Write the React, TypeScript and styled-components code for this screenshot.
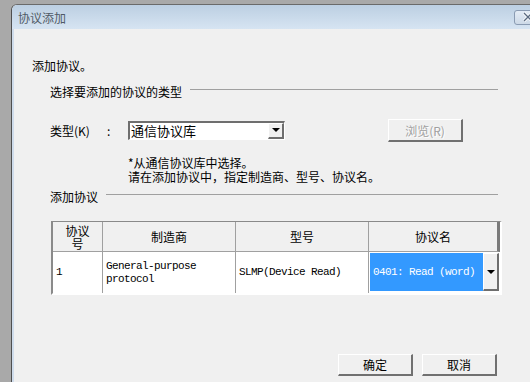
import React from 'react';
import styled, { createGlobalStyle } from 'styled-components';

const GlobalStyle = createGlobalStyle`
  html, body {
    margin: 0;
    padding: 0;
    background: #a9a9a9;
    overflow: hidden;
  }
  body {
    font-family: "Noto Sans CJK SC", "Liberation Sans", sans-serif;
    font-size: 12px;
    color: #000;
  }
`;

const Desktop = styled.div`
  padding: 4px 0 0 11px;
  height: 378px;
`;

const Window = styled.div`
  width: 519px;
  height: 378px;
  box-sizing: border-box;
  border-left: 1px solid #4f4f4f;
  border-top: 1px solid #6a6a6a;
  border-top-left-radius: 6px;
  background: #f0f0f0;
  overflow: hidden;
  display: flex;
  flex-direction: column;
`;

const TitleBar = styled.div`
  height: 24px;
  flex: none;
  display: flex;
  align-items: center;
  padding-left: 6px;
  background: linear-gradient(#bccfe2, #d6e4f2);
  color: #505a66;
  font-size: 12px;
  overflow: hidden;
`;

const CloseButton = styled.div`
  margin-left: auto;
  margin-right: -24px;
  width: 40px;
  height: 15px;
  flex: none;
  border: 1px solid #8a9bb2;
  border-radius: 3px;
  background: linear-gradient(#e4ecf5, #cdd9e7);
  display: flex;
  align-items: center;
  padding-left: 7px;
  box-sizing: border-box;
`;

const Frame = styled.div`
  flex: 1;
  border-left: 2px solid #cfdceb;
`;

const Content = styled.div`
  width: 488px;
  padding-left: 18px;
  box-sizing: border-box;
  display: flex;
  flex-direction: column;
`;

const Text = styled.div<{ $top?: number }>`
  line-height: 14px;
  height: 14px;
  margin-top: ${(p) => p.$top ?? 0}px;
  white-space: nowrap;
`;

const Group = styled.div`
  padding-left: 18px;
  padding-right: 4px;
  display: flex;
  flex-direction: column;
`;

const SectionHeader = styled.div<{ $top: number }>`
  display: flex;
  align-items: center;
  gap: 8px;
  margin-top: ${(p) => p.$top}px;
  line-height: 14px;
  white-space: nowrap;
`;

const Rule = styled.div`
  flex: 1;
  height: 0;
  border-top: 1px solid #a0a0a0;
  margin-top: -5px;
`;

const TypeRow = styled.div`
  display: flex;
  align-items: center;
  height: 22px;
  margin-top: 20px;
`;

const Label = styled.span`
  width: 57px;
  white-space: nowrap;
`;

const Colon = styled.span`
  width: 21px;
`;

const Combo = styled.div`
  width: 157px;
  height: 19px;
  box-sizing: border-box;
  border-top: 2px solid #6e6e6e;
  border-left: 2px solid #6e6e6e;
  border-right: 1px solid #fff;
  border-bottom: 1px solid #fff;
  background: #fff;
  display: flex;
  align-items: center;
  font-size: 13px;
  padding-left: 1px;
`;

const ComboText = styled.span`
  flex: 1;
  line-height: 14px;
`;

const DropButton = styled.div<{ $h: number }>`
  width: 16px;
  height: ${(p) => p.$h}px;
  box-sizing: border-box;
  background: #f0f0f0;
  border-top: 1px solid #fff;
  border-left: 1px solid #fff;
  border-right: 2px solid #6e6e6e;
  border-bottom: 2px solid #6e6e6e;
  display: flex;
  align-items: center;
  justify-content: center;
  flex: none;
`;

const Arrow = styled.div`
  width: 0;
  height: 0;
  border-left: 4px solid transparent;
  border-right: 4px solid transparent;
  border-top: 4px solid #000;
`;

const Button = styled.div<{ $disabled?: boolean }>`
  width: 75px;
  height: 22px;
  box-sizing: border-box;
  border-top: 1px solid #fff;
  border-left: 1px solid #fff;
  border-right: 2px solid #707070;
  border-bottom: 2px solid #707070;
  background: #f0f0f0;
  display: flex;
  align-items: center;
  justify-content: center;
  font-size: 12px;
  color: ${(p) => (p.$disabled ? '#a0a0a0' : '#000')};
  text-shadow: ${(p) => (p.$disabled ? '1px 1px 0 #fff' : 'none')};
`;

const BrowseButton = styled(Button)`
  margin-left: 103px;
  height: 23px;
  margin-top: 1px;
`;

const Note = styled.div`
  margin-top: 15px;
  padding-left: 78px;
  display: flex;
  flex-direction: column;
`;

const Table = styled.div`
  margin: 17px 0 0 1px;
  width: 451px;
  box-sizing: border-box;
  border-top: 1px solid #8a8a8a;
  border-left: 2px solid #8a8a8a;
  border-right: 2px solid #fff;
  border-bottom: 2px solid #fff;
  display: grid;
  grid-template-columns: 50px 133px 133px 131px;
  grid-template-rows: 30px 41px;
`;

const HeadCell = styled.div<{ $last?: boolean }>`
  background: #f0f0f0;
  border-right: ${(p) => (p.$last ? '3px solid #7a7a7a' : '1px solid #a0a0a0')};
  border-bottom: 1px solid #a0a0a0;
  display: flex;
  flex-direction: column;
  align-items: center;
  justify-content: center;
  text-align: center;
  font-size: 12px;
  line-height: 13px;
`;

const Cell = styled.div<{ $last?: boolean }>`
  background: #fff;
  border-right: ${(p) => (p.$last ? 'none' : '1px solid #a0a0a0')};
  display: flex;
  align-items: center;
  padding-left: 3px;
  font-family: "Liberation Mono", "Noto Sans CJK SC", monospace;
  font-size: 11px;
  letter-spacing: -0.6px;
  line-height: 13px;
  white-space: pre;
`;

const SelectCell = styled.div`
  background: #fff;
  display: flex;
  padding: 1px 0 0 1px;
`;

const SelectValue = styled.div`
  width: 113px;
  height: 38px;
  background: #3399ff;
  color: #fff;
  display: flex;
  align-items: center;
  padding-left: 3px;
  box-sizing: border-box;
  font-family: "Liberation Mono", monospace;
  font-size: 11px;
  letter-spacing: -0.6px;
  white-space: pre;
`;

const ButtonRow = styled.div`
  display: flex;
  justify-content: flex-end;
  gap: 9px;
  margin: 59px 1px 0 0;
`;

export default function App() {
  return (
    <>
      <GlobalStyle />
      <Desktop>
        <Window>
          <TitleBar>
            协议添加
            <CloseButton>
              <svg width="12" height="10" viewBox="0 0 12 10">
                <path d="M2 1 L10 9 M10 1 L2 9" stroke="#fff" strokeWidth="3" />
                <path d="M2 1 L10 9 M10 1 L2 9" stroke="#5a6a80" strokeWidth="1.3" />
              </svg>
            </CloseButton>
          </TitleBar>
          <Frame>
            <Content>
              <Text $top={30}>添加协议。</Text>
              <Group>
                <SectionHeader $top={12}>
                  选择要添加的协议的类型
                  <Rule />
                </SectionHeader>
                <TypeRow>
                  <Label>类型(K)</Label>
                  <Colon>:</Colon>
                  <Combo>
                    <ComboText>通信协议库</ComboText>
                    <DropButton $h={16}>
                      <Arrow />
                    </DropButton>
                  </Combo>
                  <BrowseButton $disabled>浏览(R)</BrowseButton>
                </TypeRow>
                <Note>
                  <Text>*从通信协议库中选择。</Text>
                  <Text>请在添加协议中，指定制造商、型号、协议名。</Text>
                </Note>
                <SectionHeader $top={6}>
                  添加协议
                  <Rule />
                </SectionHeader>
                <Table>
                  <HeadCell>
                    <span>协议</span>
                    <span>号</span>
                  </HeadCell>
                  <HeadCell>制造商</HeadCell>
                  <HeadCell>型号</HeadCell>
                  <HeadCell $last>协议名</HeadCell>
                  <Cell>1</Cell>
                  <Cell>{'General-purpose\nprotocol'}</Cell>
                  <Cell>SLMP(Device Read)</Cell>
                  <SelectCell>
                    <SelectValue>0401: Read (word)</SelectValue>
                    <DropButton $h={38}>
                      <Arrow />
                    </DropButton>
                  </SelectCell>
                </Table>
                <ButtonRow>
                  <Button>确定</Button>
                  <Button>取消</Button>
                </ButtonRow>
              </Group>
            </Content>
          </Frame>
        </Window>
      </Desktop>
    </>
  );
}
